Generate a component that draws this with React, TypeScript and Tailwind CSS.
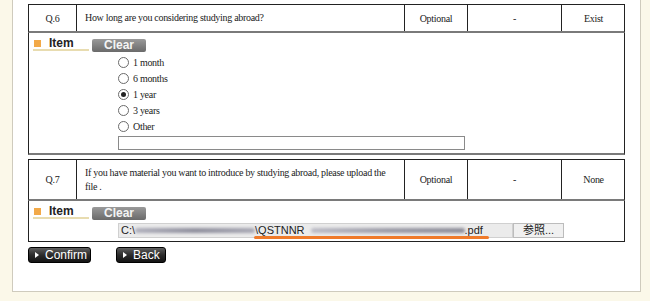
import React from 'react';

const serif = { fontFamily: '"Liberation Serif", "Times New Roman", serif' };
const sans = { fontFamily: '"Liberation Sans", Arial, "Noto Sans CJK JP", sans-serif' };

function ItemLabel() {
  return (
    <div className="flex items-start gap-[3px]">
      <div className="w-[56px] h-[17px] border-b-2 border-[#e8dcb0] flex items-start pl-[1px] pt-[6px]">
        <span className="w-[7px] h-[7px] bg-[#f2a948]" />
        <span className="ml-[8px] -mt-[4px] text-[12px] font-bold text-[#222] leading-[14px]" style={sans}>Item</span>
      </div>
      <button className="mt-[5px] w-[54px] h-[13px] rounded-[2px] bg-gradient-to-b from-[#9a9a9a] to-[#6a6a6a] text-[#f4f4f4] text-[12px] font-bold leading-[13px]" style={sans}>Clear</button>
    </div>
  );
}

function QuestionRow({ num, text, tall, last }: { num: string; text: React.ReactNode; tall?: boolean; last: string }) {
  return (
    <div className={`grid grid-cols-[48px_328px_63px_94px_63px] border border-[#222] border-b-2 border-b-[#7a7a7a] text-[10px] tracking-[-0.3px] text-[#222] ${tall ? 'h-[42px]' : 'h-[29px]'}`} style={serif}>
      <div className="flex items-center justify-center border-r border-[#222]">{num}</div>
      <div className="flex items-center px-[8px] border-r border-[#222] leading-[14px]">{text}</div>
      <div className="flex items-center justify-center border-r border-[#222]">Optional</div>
      <div className="flex items-center justify-center border-r border-[#222]">-</div>
      <div className="flex items-center justify-center">{last}</div>
    </div>
  );
}

function Radio({ label, checked }: { label: string; checked?: boolean }) {
  return (
    <div className="flex items-center h-[16px]">
      <span className="w-[11px] h-[11px] rounded-full border border-[#6b6b6b] bg-white flex items-center justify-center">
        {checked && <span className="w-[5px] h-[5px] rounded-full bg-[#222]" />}
      </span>
      <span className="ml-[4px] text-[10px] tracking-[-0.3px] text-[#222]" style={serif}>{label}</span>
    </div>
  );
}

function NavButton({ label, w }: { label: string; w: string }) {
  return (
    <button className={`${w} h-[16px] rounded-[3px] bg-gradient-to-b from-[#5e5e5e] via-[#2c2c2c] to-[#141414] border border-[#000] text-white text-[12px] flex items-center pl-[6px] leading-none`} style={sans}>
      <span className="w-0 h-0 border-y-[3px] border-y-transparent border-l-[4px] border-l-white mr-[6px]" />
      {label}
    </button>
  );
}

export default function App() {
  return (
    <div className="w-[650px] h-[301px] bg-[#fbf8e9] overflow-hidden">
      <div className="ml-[12px] w-[629px] h-[292px] bg-white border-l border-r border-b border-[#cfcbbd] pl-[15px] pt-[4px]">
        <div className="w-[597px]">
          <QuestionRow num="Q.6" text="How long are you considering studying abroad?" last="Exist" />
          <div className="border-x border-[#222] border-b-2 border-b-[#7a7a7a] h-[122px] pl-[4px] pt-[1px]">
            <ItemLabel />
            <div className="ml-[85px] mt-[2px]">
              <Radio label="1 month" />
              <Radio label="6 months" />
              <Radio label="1 year" checked />
              <Radio label="3 years" />
              <Radio label="Other" />
              <div className="mt-[2px] w-[347px] h-[14px] border border-[#8a8a8a]" />
            </div>
          </div>

          <div className="mt-[4px]">
            <QuestionRow
              num="Q.7"
              tall
              text="If you have material you want to introduce by studying abroad, please upload the file ."
              last="None"
            />
            <div className="border-x border-b border-[#222] h-[41px] pl-[4px] pt-[1px]">
              <ItemLabel />
              <div className="ml-[85px] mt-[3px] flex h-[15px] relative">
                <div className="w-[395px] bg-[#ebebeb] border border-[#d0d0d0] flex items-center pl-[2px] text-[11px] text-[#222] whitespace-nowrap" style={sans}>
                  <span>C:\</span>
                  {/* blurred-out path segments */}
                  <span className="w-[120px] h-[5px] rounded-full bg-gradient-to-r from-[#b0b0bc] via-[#8e8e9c] to-[#a8a8b4] blur-[1.5px]" />
                  <span>\QSTNNR</span>
                  <span className="ml-[6px] w-[154px] h-[5px] rounded-full bg-gradient-to-r from-[#bcbcc6] via-[#9a9aa6] to-[#8c8c98] blur-[1.5px]" />
                  <span>.pdf</span>
                </div>
                <div className="w-[51px] border border-[#bcbcbc] bg-[#f0f0f0] flex items-center justify-center text-[11px] text-[#222]" style={sans}>参照...</div>
                <span className="absolute left-[136px] top-[13px] w-[235px] h-[3px] rounded-full bg-[#ef7a2a]" />
              </div>
            </div>
          </div>

          <div className="flex gap-[25px] mt-[5px]">
            <NavButton label="Confirm" w="w-[63px]" />
            <NavButton label="Back" w="w-[50px]" />
          </div>
        </div>
      </div>
    </div>
  );
}
